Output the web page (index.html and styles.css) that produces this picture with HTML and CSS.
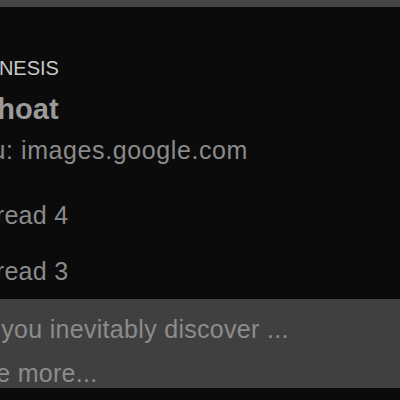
FILE: index.html
```html
<!DOCTYPE html>
<html>
<head>
    <title>Thread reader</title>
    <link rel="stylesheet" href="styles.css">
</head>
<body>
    <div class="topbar"></div>

    <div class="article">
        <div class="kicker">GENESIS</div>
        <h1 class="title">Whoat</h1>
        <div class="source">Mu: images.google.com</div>

        <div class="thread-list">
            <div class="thread-row">Thread 4</div>
            <div class="thread-row">Thread 3</div>
        </div>
    </div>

    <div class="snippet">
        <div class="snippet-text">as you inevitably discover ...</div>
        <div class="snippet-more">See more...</div>
    </div>
</body>
</html>
```

FILE: styles.css
```css
html, body {
    margin: 0;
    padding: 0;
}
body {
    width: 400px;
    height: 400px;
    overflow: hidden;
    background: #0b0b0b;
    font-family: "Liberation Sans", Arial, sans-serif;
}
.topbar {
    height: 7px;
    background: #454545;
}
.article {
    padding-top: 46px;
    margin-left: -30px;
}
.kicker {
    font-size: 20px;
    line-height: 30px;
    color: #c8c8c8;
}
.title {
    margin: 6px 0 0;
    font-size: 29px;
    line-height: 40px;
    font-weight: bold;
    color: #9a9a9a;
}
.source {
    margin-top: 3px;
    font-size: 25px;
    line-height: 36px;
    letter-spacing: 0.6px;
    color: #8a8a8a;
}
.thread-list {
    margin-top: 19px;
}
.thread-row {
    height: 56px;
    margin-left: -4px;
    display: flex;
    align-items: center;
    font-size: 25px;
    letter-spacing: 0.3px;
    color: #8a8a8a;
}
.snippet {
    height: 81px;
    padding: 8px 0 0;
    margin-left: -30px;
    background: #404040;
    overflow: hidden;
    font-size: 25px;
    line-height: 44px;
    letter-spacing: 0.3px;
    color: #8c8c8c;
}
.snippet-text {
    margin-left: -3px;
}
.snippet-more {
    margin-left: -5px;
}
```
